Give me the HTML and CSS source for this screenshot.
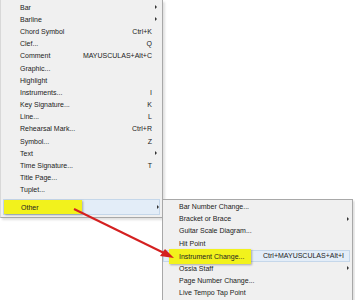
FILE: index.html
```html
<!DOCTYPE html>
<html lang="en">
<head>
    <meta charset="UTF-8">
    <title>Create menu</title>
    <link rel="stylesheet" href="styles.css">
</head>
<body>
    <div class="menu">
        <div class="item"><span>Bar</span><span class="arrow"></span></div>
        <div class="item"><span>Barline</span><span class="arrow"></span></div>
        <div class="item"><span>Chord Symbol</span><span class="key">Ctrl+K</span></div>
        <div class="item"><span>Clef...</span><span class="key">Q</span></div>
        <div class="item"><span>Comment</span><span class="key">MAYUSCULAS+Alt+C</span></div>
        <div class="item"><span>Graphic...</span></div>
        <div class="item"><span>Highlight</span></div>
        <div class="item"><span>Instruments...</span><span class="key">I</span></div>
        <div class="item"><span>Key Signature...</span><span class="key">K</span></div>
        <div class="item"><span>Line...</span><span class="key">L</span></div>
        <div class="item"><span>Rehearsal Mark...</span><span class="key">Ctrl+R</span></div>
        <div class="item"><span>Symbol...</span><span class="key">Z</span></div>
        <div class="item"><span>Text</span><span class="arrow"></span></div>
        <div class="item"><span>Time Signature...</span><span class="key">T</span></div>
        <div class="item"><span>Title Page...</span></div>
        <div class="item"><span>Tuplet...</span></div>
        <div class="item other"><span class="mark">Other</span><span class="arrow"></span></div>
    </div>

    <div class="submenu">
        <div class="item"><span>Bar Number Change...</span></div>
        <div class="item"><span>Bracket or Brace</span><span class="arrow"></span></div>
        <div class="item"><span>Guitar Scale Diagram...</span></div>
        <div class="item"><span>Hit Point</span></div>
        <div class="item active"><span class="mark">Instrument Change...</span><span class="key">Ctrl+MAYUSCULAS+Alt+I</span></div>
        <div class="item"><span>Ossia Staff</span><span class="arrow"></span></div>
        <div class="item"><span>Page Number Change...</span></div>
        <div class="item"><span>Live Tempo Tap Point</span></div>
    </div>

    <svg class="pointer" width="355" height="300" viewBox="0 0 355 300">
        <line x1="74" y1="209" x2="164" y2="253" stroke="#d42020" stroke-width="2"/>
        <polygon points="174,258 160,256 165,249" fill="#d42020"/>
    </svg>
</body>
</html>
```

FILE: styles.css
```css
body {
    margin: 0;
    width: 355px;
    height: 300px;
    background-color: #ffffff;
    font-family: "Liberation Sans", Arial, sans-serif;
    font-size: 7px;
    color: #222222;
    position: relative;
    overflow: hidden;
}

.menu {
    width: 161px;
    padding-top: 1px;
    padding-bottom: 2px;
    background-color: #f0f0f0;
    border-left: 1px solid #d8d8d8;
    border-right: 1px solid #a8a8a8;
    border-bottom: 1px solid #a8a8a8;
    box-shadow: 2px 2px 2px rgba(0, 0, 0, 0.12);
    display: flex;
    flex-direction: column;
}

.item {
    height: 12.2px;
    display: flex;
    align-items: center;
    justify-content: space-between;
    padding-left: 19px;
    padding-right: 10px;
}

.key {
    margin-left: 8px;
}

.arrow {
    width: 0;
    height: 0;
    margin-right: -5px;
    border-left: 2px solid #333333;
    border-top: 2px solid transparent;
    border-bottom: 2px solid transparent;
}

.menu .other {
    height: 14px;
    margin-top: 3px;
    margin-left: 2px;
    margin-right: 2px;
    padding-left: 0;
    padding-right: 5px;
    background-color: #e3edf8;
    border: 1px solid #c5d7ea;
}

.mark {
    background-color: #f2f21c;
    box-shadow: 1px 1px 2px rgba(0, 0, 0, 0.3);
    align-self: stretch;
    display: flex;
    align-items: center;
}

.other .mark {
    width: 61px;
    padding-left: 17px;
}

.submenu {
    position: absolute;
    left: 162px;
    top: 199px;
    width: 189px;
    padding-bottom: 1px;
    background-color: #f0f0f0;
    border: 1px solid #a8a8a8;
    box-shadow: 2px 2px 2px rgba(0, 0, 0, 0.12);
    display: flex;
    flex-direction: column;
}

.submenu .item {
    height: 12.4px;
    padding-left: 16px;
    padding-right: 8px;
}

.submenu .active {
    margin-right: 2px;
    padding-left: 0;
    padding-right: 6px;
    background-color: #e3edf8;
    box-shadow: inset 0 0 0 1px #c5d7ea;
}

.active .mark {
    width: 72px;
    margin-left: 6px;
    margin-top: -1px;
    margin-bottom: -2px;
    padding-left: 10px;
}

.pointer {
    position: absolute;
    left: 0;
    top: 0;
}
```
